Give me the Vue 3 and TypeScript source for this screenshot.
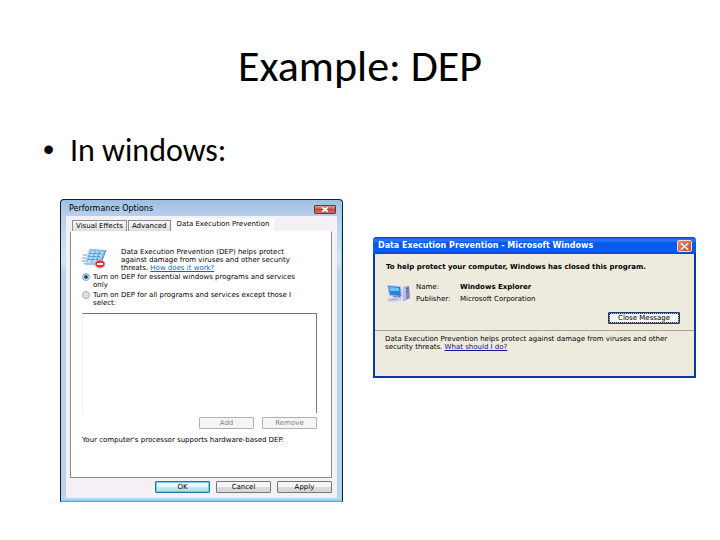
<script setup lang="ts">
import { ref } from 'vue'

const scope = ref<string>('essential')
</script>

<template>
  <main class="slide">
    <h1>Example: DEP</h1>
    <ul class="points">
      <li>In windows:</li>
    </ul>
    <div class="shots">
      <section class="vista" aria-labelledby="perf-title">
        <header class="vista-bar">
          <h2 id="perf-title">Performance Options</h2>
          <button class="vista-close" type="button" aria-label="Close">
            <svg viewBox="0 0 22 9" width="22" height="9" aria-hidden="true">
              <path d="M8 2l6 5M14 2l-6 5" stroke="#6c4a50" stroke-width="3" />
              <path d="M8 2l6 5M14 2l-6 5" stroke="#fff" stroke-width="2" />
            </svg>
          </button>
        </header>
        <div class="client">
          <nav class="tabs" role="tablist">
            <button type="button" role="tab">Visual Effects</button>
            <button type="button" role="tab">Advanced</button>
            <button type="button" role="tab" class="active" aria-selected="true">Data Execution Prevention</button>
          </nav>
          <div class="panel">
            <div class="intro">
              <svg class="chip" viewBox="0 0 26 22" width="26" height="22" aria-hidden="true">
                <path d="M7 1L24 2L18 18L1 16Z" fill="#cfe3f3" />
                <path d="M8 1L24 2L19 15L4 14Z" fill="#86bde8" />
                <path d="M24 2L18 18" stroke="#4d8fc8" />
                <path d="M9 4h3M14 4h2M18 5h3M8 7h3M13 7h2M17 8h3M7 10h3M12 10h2M16 11h2M6 13h3M11 13h3" stroke="#f4faff" stroke-width="1" />
                <path d="M8 5.500h12M7 8.500h12M6 11.500h12" stroke="#4f9cd8" stroke-dasharray="3 1" />
                <path d="M1 7h4M0 10h4M0 13h3M3 16h10" stroke="#6ea3cb" />
                <ellipse cx="18" cy="16" rx="5" ry="4" fill="#db3037" stroke="#f0a0a0" />
                <path d="M15 16h6" stroke="#fff" stroke-width="2" />
              </svg>
              <p>
                Data Execution Prevention (DEP) helps protect<br />
                against damage from viruses and other security<br />
                threats. <a href="#how">How does it work?</a>
              </p>
            </div>
            <label class="choice">
              <input v-model="scope" type="radio" name="scope" value="essential" />
              <span>Turn on DEP for essential windows programs and services<br />only</span>
            </label>
            <label class="choice">
              <input v-model="scope" type="radio" name="scope" value="all" />
              <span>Turn on DEP for all programs and services except those I<br />select:</span>
            </label>
            <div class="list" role="listbox" aria-label="Excepted programs"></div>
            <div class="row list-actions">
              <button class="btn" type="button" disabled>Add</button>
              <button class="btn" type="button" disabled>Remove</button>
            </div>
            <p class="support">Your computer's processor supports hardware-based DEP.</p>
          </div>
          <footer class="row">
            <button class="btn primary" type="button">OK</button>
            <button class="btn" type="button">Cancel</button>
            <button class="btn" type="button">Apply</button>
          </footer>
        </div>
      </section>

      <section class="xp" aria-labelledby="dep-title">
        <header class="xp-bar">
          <h2 id="dep-title">Data Execution Prevention - Microsoft Windows</h2>
          <button class="xp-close" type="button" aria-label="Close">
            <svg viewBox="0 0 14 11" width="14" height="11" aria-hidden="true">
              <path d="M3 2l8 7M11 2l-8 7" stroke="#fff" stroke-width="1.500" />
            </svg>
          </button>
        </header>
        <div class="xp-body">
          <p class="lead">To help protect your computer, Windows has closed this program.</p>
          <div class="program">
            <svg viewBox="0 0 26 20" width="26" height="20" aria-hidden="true">
              <path d="M17 4l6-1 1 12-6 3Z" fill="#8288c0" />
              <path d="M17 4l3-1v14l-3 1Z" fill="#b9bde0" />
              <path d="M20 6l3-1M20 9l3-1" stroke="#5359a0" />
              <path d="M1 2l14 1 2 11-14-1Z" fill="#b8c5ed" />
              <path d="M2 3l12 1 1 9-11-1Z" fill="#2b83e0" />
              <path d="M3 4l10 1 0 3-9 0Z" fill="#68c3fa" />
              <path d="M7 13h7l1 3H8Z" fill="#8187bb" />
              <path d="M1 15l11-1 5 3-9 2H2Z" fill="#d3d3ec" />
              <path d="M3 17l9-1" stroke="#9d9fc9" />
            </svg>
            <dl>
              <dt>Name:</dt>
              <dd><b>Windows Explorer</b></dd>
              <dt>Publisher:</dt>
              <dd>Microsoft Corporation</dd>
            </dl>
          </div>
          <div class="actions">
            <button class="xp-btn" type="button">Close Message</button>
          </div>
        </div>
        <p class="note">
          Data Execution Prevention helps protect against damage from viruses and other<br />
          security threats. <a href="#what">What should I do?</a>
        </p>
      </section>
    </div>
  </main>
</template>

<style>
body {
  background: #fff;
}
</style>

<style scoped>
* {
  box-sizing: border-box;
}
h1,
h2,
p,
ul,
dl,
dd {
  margin: 0;
  padding: 0;
}
button {
  font: inherit;
  color: inherit;
  padding: 0;
  margin: 0;
}
.slide {
  padding: 38px 24px 38px 43px;
  color: #000;
  font-family: Carlito, Lato, sans-serif;
}
h1 {
  font-size: 44px;
  line-height: 56px;
  font-weight: 400;
  text-align: center;
  padding-right: 19px;
}
.points {
  list-style: none;
  margin-top: 39px;
  font-size: 32px;
  line-height: 36px;
}
.points li {
  display: flex;
}
.points li::before {
  content: '•';
  width: 27px;
  font-family: 'Liberation Sans', sans-serif;
  line-height: 32px;
}
.shots {
  display: grid;
  grid-template-columns: 283fr 323fr;
  column-gap: 30px;
  align-items: start;
  padding: 30px 0 0 17px;
  font-family: 'DejaVu Sans', sans-serif;
  font-size: 7px;
  line-height: 8px;
  white-space: nowrap;
}
h2 {
  font-size: 8px;
  line-height: 10px;
  font-weight: 400;
}

.vista {
  border: 1px solid #10202c;
  border-bottom-color: #4fb0cc;
  border-radius: 4px 4px 0 0;
  background: linear-gradient(#9fc0e2, #b6cfeb 15px, #d3e5f5 60px, #bcd1eb 72px);
  padding: 0 5px 3px;
  box-shadow: inset 0 -1px #7fcfe6, inset -1px 0 #8cdcf2;
}
.vista-bar {
  display: flex;
  justify-content: space-between;
  align-items: center;
  height: 16px;
  padding: 2px 1px 0 3px;
}
.vista-close {
  display: flex;
  border: 1px solid #653641;
  border-radius: 1px;
  background: linear-gradient(#e2a49b, #cc4638 50%, #d97160);
  height: 9px;
  width: 22px;
  justify-content: center;
  align-items: center;
}
.client {
  background: #f4f0f6;
  padding: 2px 5px 5px 4px;
}
.tabs {
  display: flex;
  align-items: flex-end;
  padding-left: 2px;
}
.tabs button {
  border: 1px solid #8d8d92;
  border-width: 1px 1px 0;
  background: linear-gradient(#f7f7f7, #dedede);
  height: 11px;
  padding: 0 3px;
  margin-right: 1px;
}
.tabs .active {
  border: 0;
  background: #fff;
  height: 13px;
  padding: 0 5px 2px;
}
.panel {
  background: #fff;
  border: 1px solid #8a8a8e;
  border-top-color: #fff;
  padding: 16px 14px 33px 11px;
}
.intro {
  display: flex;
  gap: 13px;
  padding-bottom: 1px;
}
.intro p {
  flex: 1;
}
.chip {
  flex: none;
}
a {
  color: #1464b4;
}
.choice {
  display: flex;
  gap: 3px;
  padding-bottom: 2px;
}
.choice input {
  appearance: none;
  flex: none;
  width: 8px;
  height: 8px;
  margin: 0;
  border: 1px solid #a4a5a5;
  border-radius: 50%;
  background: radial-gradient(#d0d3d6, #f4f4f4);
}
.choice input:checked {
  border-color: #8aa5b4;
  background: radial-gradient(#164a68 32%, #c8e4ee 55%);
}
.list {
  height: 100px;
  margin-top: 4px;
  border: 1px solid #77777c;
  border-left-color: #f0f0f0;
  border-bottom: 0;
}
.row {
  display: flex;
  justify-content: flex-end;
  gap: 6px;
}
.list-actions {
  gap: 8px;
  padding-top: 4px;
}
.btn {
  width: 55px;
  height: 12px;
  border: 1px solid #77777a;
  border-radius: 1px;
  background: linear-gradient(#f6f6f6 45%, #dcdcdc 50%, #d6d6d6);
}
.btn:disabled {
  border-color: #b0b0b4;
  background: #f5f5f5;
  color: #838383;
}
.primary {
  border-color: #267a98;
  background: linear-gradient(#ecf8fd 45%, #c4e8f7 50%, #a9dcf0);
  box-shadow: inset 0 0 0 1px #6fcdea;
}
.support {
  margin-top: 7px;
}
footer.row {
  padding-top: 3px;
}

.xp {
  margin-top: 38px;
  border: 2px solid #0a36a8;
  border-top: 0;
  border-radius: 4px 4px 0 0;
  background: #eeeadd;
}
.xp-bar {
  display: flex;
  justify-content: space-between;
  align-items: center;
  height: 17px;
  margin: 0 -2px;
  padding: 1px 4px 0 5px;
  border-radius: 4px 4px 0 0;
  background: linear-gradient(#0a3fc0, #2d7bf5 3px, #0558e8 6px, #0560f5 14px, #0644c8);
  color: #fff;
}
.xp-bar h2 {
  font-weight: 700;
}
.xp-close {
  display: flex;
  justify-content: center;
  align-items: center;
  width: 15px;
  height: 12px;
  border: 1px solid #f0d8d0;
  border-radius: 2px;
  background: linear-gradient(135deg, #e58b74, #c94c30);
}
.xp-body {
  padding: 9px 14px 6px 11px;
  border-bottom: 1px solid #a5a398;
}
.lead {
  font-weight: 700;
}
.program {
  display: flex;
  gap: 4px;
  padding-top: 12px;
}
dl {
  display: grid;
  grid-template-columns: 44px 1fr;
  row-gap: 4px;
}
.actions {
  display: flex;
  justify-content: flex-end;
  padding-top: 9px;
}
.xp-btn {
  width: 72px;
  height: 12px;
  border: 1px solid #1c3c70;
  border-radius: 1px;
  background: #f6f6f2;
  box-shadow: inset 0 0 0 1px #a9bfe8;
  outline: 1px dotted #303848;
  outline-offset: -2px;
}
.note {
  padding: 4px 10px 25px;
}
.note a {
  color: #14148c;
}
</style>
